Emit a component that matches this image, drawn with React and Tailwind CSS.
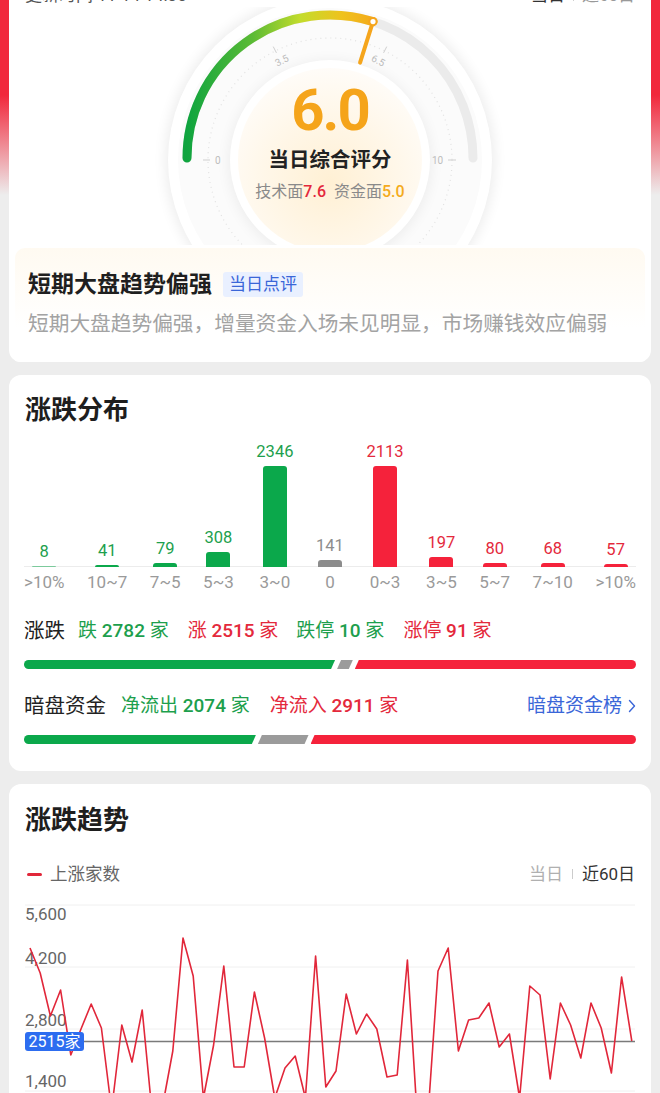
import React from 'react';

const GREEN = '#1d9f4d';
const RED = '#e4293c';

const dist = [
  { label: '>10%', value: 8, h: 1, tone: 'down' },
  { label: '10~7', value: 41, h: 2, tone: 'down' },
  { label: '7~5', value: 79, h: 4, tone: 'down' },
  { label: '5~3', value: 308, h: 15, tone: 'down' },
  { label: '3~0', value: 2346, h: 101, tone: 'down' },
  { label: '0', value: 141, h: 7, tone: 'flat' },
  { label: '0~3', value: 2113, h: 101, tone: 'up' },
  { label: '3~5', value: 197, h: 10, tone: 'up' },
  { label: '5~7', value: 80, h: 4, tone: 'up' },
  { label: '7~10', value: 68, h: 4, tone: 'up' },
  { label: '>10%', value: 57, h: 3, tone: 'up' },
];

const barColor = { down: 'bg-[#0ba84b]', flat: 'bg-[#8c8c8c]', up: 'bg-[#f5223b]' };
const numColor = { down: 'text-[#1d9f4d]', flat: 'text-[#8d8d8d]', up: 'text-[#e4293c]' };

// 近60日 上涨家数 (plotted in page px)
const trend = [
  950, 975, 1018, 992, 1057, 1031, 1006, 1030, 1112, 1027, 1064, 1012, 1118, 1108, 1053,
  940, 978, 1100, 1047, 968, 1069, 1069, 994, 1040, 1100, 1070, 1058, 1100, 958, 1089,
  1073, 996, 1036, 1016, 1031, 1079, 1077, 962, 1125, 1120, 973, 950, 1053, 1022, 1020,
  1005, 1049, 1036, 1100, 988, 997, 1081, 1005, 1027, 1060, 1005, 1030, 1075, 979, 1043,
];

function Gauge() {
  const cx = 330;
  const cy = 158;
  const r = 143;
  const a = (72.5 * Math.PI) / 180;
  const ex = cx + r * Math.cos(a);
  const ey = cy - r * Math.sin(a);
  const nx = cx + 100 * Math.cos(a);
  const ny = cy - 100 * Math.sin(a);
  const tick = (deg, r1, r2) => {
    const t = (deg * Math.PI) / 180;
    return { x1: cx + r1 * Math.cos(t), y1: cy - r1 * Math.sin(t), x2: cx + r2 * Math.cos(t), y2: cy - r2 * Math.sin(t) };
  };
  const t35 = tick(117, 118, 125);
  const t65 = tick(63, 118, 125);
  return (
    <svg className="absolute inset-0" width="642" height="238" viewBox="0 0 642 238">
      <defs>
        <filter id="soft" x="-30%" y="-30%" width="160%" height="160%">
          <feGaussianBlur stdDeviation="7" />
        </filter>
        <linearGradient id="arcg" gradientUnits="userSpaceOnUse" x1="187" y1="0" x2="376" y2="0">
          <stop offset="0" stopColor="#0fa43f" />
          <stop offset="0.35" stopColor="#5cbb35" />
          <stop offset="0.6" stopColor="#c3dc2c" />
          <stop offset="0.82" stopColor="#efc21d" />
          <stop offset="1" stopColor="#f4a81a" />
        </linearGradient>
        <radialGradient id="core" cx="0.5" cy="0.62" r="0.62">
          <stop offset="0" stopColor="#fff0d4" />
          <stop offset="0.6" stopColor="#fff7e9" />
          <stop offset="1" stopColor="#fffcf8" />
        </radialGradient>
      </defs>
      <g transform="translate(-9,-7)">
        <circle cx={cx} cy={cy + 2} r="164" fill="#000" opacity="0.08" filter="url(#soft)" />
        <circle cx={cx} cy={cy + 2} r="162" fill="#fff" />
        <circle cx={cx} cy={cy + 2} r="152" fill="#fbfbfb" />
        <path d={`M ${cx - r} ${cy} A ${r} ${r} 0 0 1 ${cx + r} ${cy}`} fill="none" stroke="#ebebeb" strokeWidth="9" strokeLinecap="round" />
        <path d={`M ${cx - r} ${cy} A ${r} ${r} 0 0 1 ${ex} ${ey}`} fill="none" stroke="url(#arcg)" strokeWidth="9" strokeLinecap="round" />
        <circle cx={cx} cy={cy + 2} r="122" fill="none" stroke="#e2e2e2" strokeWidth="1.2" strokeDasharray="1 4" />
        <circle cx={cx} cy={cy + 4} r="101" fill="#000" opacity="0.06" filter="url(#soft)" />
        <circle cx={cx} cy={cy + 2} r="100" fill="#fff" />
        <circle cx={cx} cy={cy + 2} r="92" fill="url(#core)" />
        <line x1={ex} y1={ey} x2={nx} y2={ny} stroke="#f5a51c" strokeWidth="4" strokeLinecap="round" />
        <circle cx={ex} cy={ey} r="3.6" fill="#fff" stroke="#f5a51c" strokeWidth="2" />
        <g fill="#bdbdbd" fontFamily="Roboto, sans-serif" fontSize="10">
          <line x1="203" y1="160" x2="210" y2="160" stroke="#cfcfcf" strokeWidth="1" />
          <text x="215" y="164">0</text>
          <text x="432" y="164">10</text>
          <line x1="448" y1="160" x2="456" y2="160" stroke="#cfcfcf" strokeWidth="1" />
          <line {...t35} stroke="#cfcfcf" strokeWidth="1" />
          <line {...t65} stroke="#cfcfcf" strokeWidth="1" />
          <text x="282" y="64" textAnchor="middle" transform="rotate(-27 282 61)">3.5</text>
          <text x="378" y="64" textAnchor="middle" transform="rotate(27 378 61)">6.5</text>
        </g>
      </g>
    </svg>
  );
}

function ScoreCard() {
  return (
    <section className="overflow-hidden rounded-[12px] bg-white pt-4">
      <div className="flex h-6 items-center justify-between px-4 text-[17px] leading-6">
        <span className="text-[#555]">更新时间 11-14 14:30</span>
        <div className="flex items-center gap-2">
          <span className="text-[#333]">当日</span>
          <span className="h-3 w-px bg-[#cfcfcf]" />
          <span className="text-[#999]">近60日</span>
        </div>
      </div>
      <div className="relative h-[238px] overflow-hidden">
        <Gauge />
        <div className="absolute inset-x-0 top-[74px] flex flex-col items-center">
          <div className="text-[58px] font-bold leading-[58px] tracking-[-2px] text-[#f5a41a]">6.0</div>
          <div className="mt-[7px] text-[20.5px] font-bold leading-[28px] text-[#222]">当日综合评分</div>
          <div className="mt-[7px] text-[16px] leading-[22px] text-[#8a8a8a]">
            技术面<span className="font-medium text-[#e4283b]">7.6</span>
            <span className="ml-[8px]">资金面</span>
            <span className="font-medium text-[#f4ab1c]">5.0</span>
          </div>
        </div>
      </div>
      <div className="mx-[6px] mt-[3px] rounded-t-[10px] bg-[linear-gradient(180deg,#fffaf1,#ffffff_70%)] px-[13px] pb-6 pt-6">
        <div className="flex items-center gap-[11px]">
          <h2 className="text-[23px] font-bold leading-[25px] text-[#1f1f1f]">短期大盘趋势偏强</h2>
          <span className="rounded-[3px] bg-[#e9f0ff] px-[6px] text-[17px] leading-[25px] text-[#3a66d8]">当日点评</span>
        </div>
        <p className="mt-[13px] whitespace-nowrap text-[20.7px] leading-[28px] text-[#a3a3a3]">
          短期大盘趋势偏强，增量资金入场未见明显，市场赚钱效应偏弱
        </p>
      </div>
    </section>
  );
}

function SplitBar({ down, flat, up }) {
  return (
    <div className="mt-[17px] flex h-[9px] gap-[2px]">
      <div
        className="basis-0 rounded-l-full bg-[#0ba84b] [clip-path:polygon(0_0,100%_0,calc(100%_-_4px)_100%,0_100%)]"
        style={{ flexGrow: down }}
      />
      <div
        className="basis-0 bg-[#9b9b9b] [clip-path:polygon(4px_0,100%_0,calc(100%_-_4px)_100%,0_100%)]"
        style={{ flexGrow: flat }}
      />
      <div
        className="basis-0 rounded-r-full bg-[#f5223b] [clip-path:polygon(4px_0,100%_0,100%_100%,0_100%)]"
        style={{ flexGrow: up }}
      />
    </div>
  );
}

function Stat({ name, value, color, className = '' }) {
  return (
    <span className={`${className} text-[19px] leading-6`} style={{ color }}>
      {name} <span className="font-medium">{value}</span> 家
    </span>
  );
}

function DistributionCard() {
  return (
    <section className="rounded-[12px] bg-white px-[15px] pb-[27px] pt-[17px]">
      <h2 className="pl-px text-[26px] font-bold leading-[36px] text-[#1e1e1e]">涨跌分布</h2>
      <div className="mt-[14px] flex items-end justify-between bg-[linear-gradient(#ececec,#ececec)] bg-[length:100%_1px] bg-[position:0_calc(100%_-_26px)] bg-no-repeat">
        {dist.map((d, i) => (
          <div key={i} className="flex min-w-6 flex-col items-center">
            <span className={`mb-[4px] text-[16.5px] leading-5 ${numColor[d.tone]}`}>{d.value}</span>
            <div
              className={`w-6 rounded-t-[3px] ${barColor[d.tone]} ${d.value < 10 ? 'opacity-50' : ''}`}
              style={{ height: d.h }}
            />
            <span className="mt-[4px] whitespace-nowrap text-[17px] leading-[22px] text-[#9a9a9a]">{d.label}</span>
          </div>
        ))}
      </div>

      <div className="mt-[26px] flex h-6 items-center">
        <span className="mr-[13px] text-[20.5px] leading-6 text-[#222]">涨跌</span>
        <Stat name="跌" value="2782" color={GREEN} className="mr-[19px]" />
        <Stat name="涨" value="2515" color={RED} className="mr-[18px]" />
        <Stat name="跌停" value="10" color={GREEN} className="mr-[19px]" />
        <Stat name="涨停" value="91" color={RED} />
      </div>
      <SplitBar down={2782} flat={141} up={2515} />

      <div className="mt-[25px] flex h-6 items-center">
        <span className="mr-[15px] text-[20.5px] leading-6 text-[#222]">暗盘资金</span>
        <Stat name="净流出" value="2074" color={GREEN} className="mr-[20px]" />
        <Stat name="净流入" value="2911" color={RED} />
        <span className="ml-auto flex items-center gap-[6px] text-[19px] leading-6 text-[#3a66d8]">
          暗盘资金榜
          <svg width="8" height="14" viewBox="0 0 8 14" fill="none">
            <path d="M1.5 1.5 L6.5 7 L1.5 12.5" stroke="#3a66d8" strokeWidth="1.4" strokeLinecap="round" strokeLinejoin="round" />
          </svg>
        </span>
      </div>
      <SplitBar down={2074} flat={453} up={2911} />
    </section>
  );
}

function TrendChart() {
  const pts = trend.map((y, i) => `${(30 + i * 10.2).toFixed(1)},${y}`).join(' ');
  const grid = [907, 969, 1031, 1093, 1155];
  const labels = [
    { t: '5,600', y: 922 },
    { t: '4,200', y: 966 },
    { t: '2,800', y: 1028 },
    { t: '1,400', y: 1089 },
    { t: '0', y: 1151 },
  ];
  return (
    <svg className="mt-3 block" width="610" height="290" viewBox="0 0 610 290">
      <g transform="translate(-25,-900)">
        {grid.map((y) => (
          <line key={y} x1="25" y1={y} x2="635" y2={y} stroke="#f0f0f0" strokeWidth="1" />
        ))}
        <g fill="#666" fontFamily="Roboto, sans-serif" fontSize="17">
          {labels.map((l) => (
            <text key={l.t} x="25" y={l.y}>
              {l.t}
            </text>
          ))}
        </g>
        <line x1="25" y1="1043.5" x2="635" y2="1043.5" stroke="#7a7a7a" strokeWidth="1.5" />
        <polyline points={pts} fill="none" stroke="#e1273a" strokeWidth="1.6" strokeLinejoin="round" />
        <rect x="25" y="1034" width="59" height="19" rx="3" fill="#2d6df0" />
        <text x="54.5" y="1049" textAnchor="middle" fill="#fff" fontSize="16" fontFamily="Roboto, 'Noto Sans CJK SC', sans-serif">
          2515家
        </text>
      </g>
    </svg>
  );
}

function TrendCard() {
  return (
    <section className="rounded-[12px] bg-white px-4 pb-4 pt-[18px]">
      <h2 className="text-[26px] font-bold leading-[36px] text-[#1e1e1e]">涨跌趋势</h2>
      <div className="mt-6 flex h-6 items-center justify-between">
        <div className="flex items-center gap-2">
          <span className="ml-[2px] h-[3px] w-[15px] rounded-full bg-[#e1273a]" />
          <span className="text-[17.5px] leading-6 text-[#666]">上涨家数</span>
        </div>
        <div className="flex items-center gap-[9px] text-[17px] leading-6">
          <span className="text-[#b0b0b0]">当日</span>
          <span className="h-[10px] w-px bg-[#cccccc]" />
          <span className="text-[#333]">近60日</span>
        </div>
      </div>
      <TrendChart />
    </section>
  );
}

export default function App() {
  return (
    <div className="flex min-h-screen flex-col bg-[#ededed] bg-[linear-gradient(180deg,#f1283b_0px,#f1283b_95px,#ededed_195px)] font-['Roboto','Noto_Sans_CJK_SC',sans-serif]">
      <div className="-mt-[33px] flex flex-col gap-[13px] px-[9px] pb-6">
        <ScoreCard />
        <DistributionCard />
        <TrendCard />
      </div>
    </div>
  );
}
